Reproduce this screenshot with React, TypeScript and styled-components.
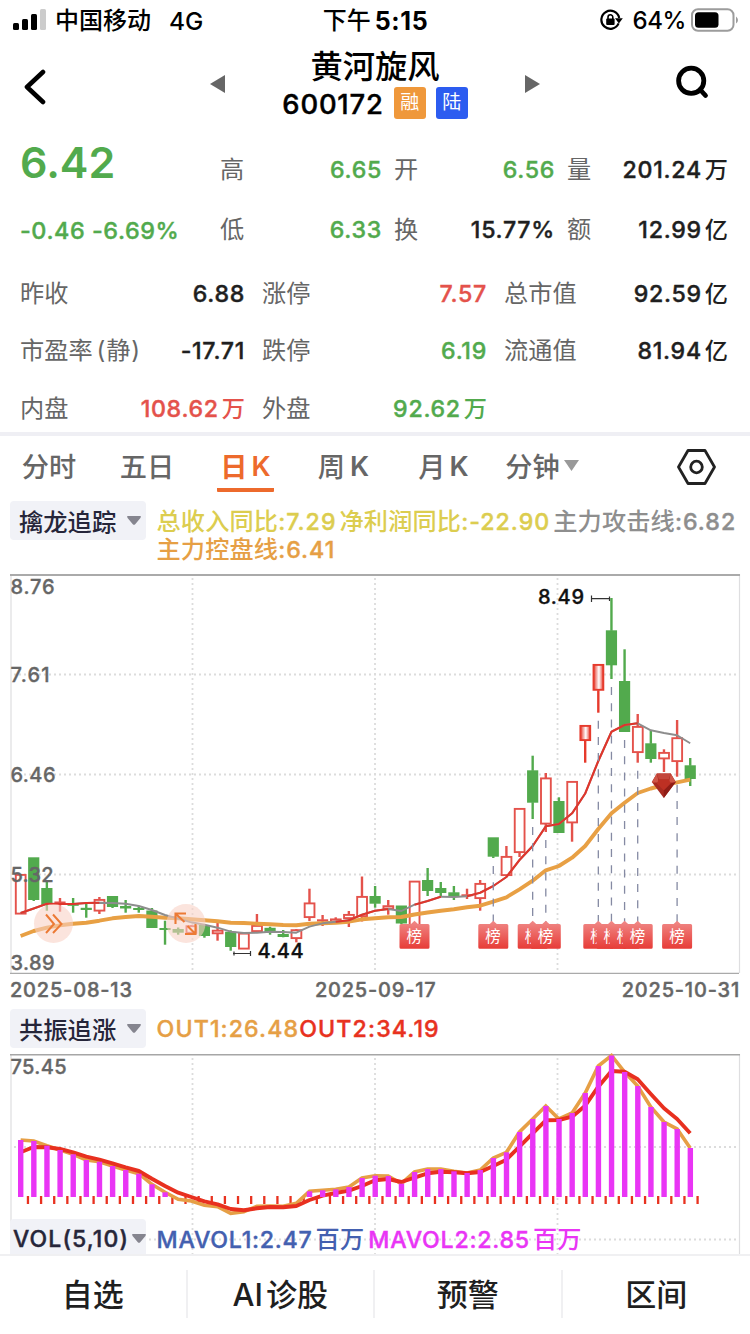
import React from 'react';
import styled, { createGlobalStyle, css } from 'styled-components';

const GREEN = '#52aa4d';
const RED = '#e4524b';
const INK = '#1f1f1f';
const GRAY = '#666666';

const GlobalStyle = createGlobalStyle`
  * { box-sizing: border-box; }
  html, body { margin: 0; padding: 0; background: #fff; }
  body { font-family: Inter, "Noto Sans CJK SC", sans-serif; -webkit-font-smoothing: antialiased; }
  svg { display: block; flex: none; }
`;

/* A weight between medium and semibold for figures */
const figure = css`
  font-weight: 500;
  -webkit-text-stroke: 0.4px currentColor;
`;

const Screen = styled.div`
  width: 750px;
  height: 1334px;
  display: flex;
  flex-direction: column;
  overflow: hidden;
  background: #fff;
  color: #000;
  white-space: nowrap;
`;

/* Status bar */
const StatusBar = styled.div`
  height: 40px;
  display: grid;
  grid-template-columns: 1fr auto 1fr;
  align-items: center;
  padding: 0 12px 0 13px;
`;
const StatusGroup = styled.div<{ $end?: boolean }>`
  display: flex;
  align-items: center;
  justify-content: ${(p) => (p.$end ? 'flex-end' : 'flex-start')};
`;
const StatusText = styled.span<{ $bold?: boolean; $ml?: number; $ls?: number; $size?: number }>`
  font-size: ${(p) => p.$size ?? 24}px;
  line-height: 30px;
  padding-top: 1px;
  font-weight: ${(p) => (p.$bold ? 700 : 500)};
  letter-spacing: ${(p) => p.$ls ?? 0}px;
  margin-left: ${(p) => p.$ml ?? 0}px;
`;

/* Header */
const Header = styled.header`
  height: 94px;
  display: flex;
  align-items: flex-start;
  padding-left: 23px;
`;
const HeaderIcon = styled.div<{ $top: number; $ml?: number }>`
  margin-top: ${(p) => p.$top}px;
  margin-left: ${(p) => p.$ml ?? 0}px;
`;
const TitleBlock = styled.div`
  width: 300px;
  display: flex;
  flex-direction: column;
  align-items: center;
  padding-top: 7px;
`;
const Title = styled.h1`
  margin: 0;
  font-size: 32.3px;
  line-height: 40px;
  font-weight: 500;
`;
const CodeRow = styled.div`
  display: flex;
  align-items: center;
  height: 32px;
`;
const Code = styled.span`
  ${figure}
  font-size: 27.4px;
  padding-top: 1px;
  letter-spacing: 0.8px;
  margin-right: 10px;
`;
const Badge = styled.span<{ $color: string }>`
  width: 32px;
  height: 32px;
  margin-right: 10px;
  border-radius: 3px;
  background: ${(p) => p.$color};
  color: #fff;
  font-size: 19px;
  line-height: 32px;
  text-align: center;
  &:last-child { margin-right: 0; }
`;

/* Quote */
const Quote = styled.section`
  height: 298px;
  padding: 3px 22px 0 20px;
`;
const QuoteRow = styled.div<{ $columns: string; $height: number }>`
  display: grid;
  grid-template-columns: ${(p) => p.$columns};
  height: ${(p) => p.$height}px;
  align-items: center;
`;
const Details = styled.div`
  padding-top: 4px;
`;
const Price = styled.div`
  color: ${GREEN};
  font-size: 43px;
  line-height: 50px;
  font-weight: 600;
  padding-bottom: 16px;
`;
const Change = styled.div`
  ${figure}
  color: ${GREEN};
  font-size: 23.4px;
  letter-spacing: 0.55px;
`;
const Cell = styled.div<{ $pad?: number }>`
  display: flex;
  justify-content: space-between;
  align-items: center;
  padding-right: ${(p) => p.$pad ?? 0}px;
  line-height: 34px;
`;
const Label = styled.span`
  color: ${GRAY};
  font-size: 24.2px;
`;
const LatinPart = styled.span`
  margin-left: 4px;
  letter-spacing: 0.8px;
`;
const Value = styled.span<{ $color?: string }>`
  ${figure}
  color: ${(p) => p.$color ?? INK};
  font-size: 23.2px;
  letter-spacing: 0.7px;
`;
const Unit = styled.span<{ $ml?: number }>`
  margin-left: ${(p) => p.$ml ?? 3}px;
  letter-spacing: 0;
  -webkit-text-stroke: 0;
`;

/* Period tabs */
const Tabs = styled.nav`
  height: 63px;
  border-top: 4px solid #efeff4;
  display: flex;
  padding: 0 34px 0 16px;
`;
const Tab = styled.div<{ $active?: boolean; $ml?: number; $width: number }>`
  display: flex;
  align-items: center;
  justify-content: center;
  width: ${(p) => p.$width}px;
  height: 56px;
  margin-left: ${(p) => p.$ml ?? 0}px;
  padding-top: 6px;
  border-bottom: 4px solid ${(p) => (p.$active ? '#ed6a2c' : 'transparent')};
  border-radius: 1px;
  color: ${(p) => (p.$active ? '#ed6a2c' : GRAY)};
  font-size: 27.2px;
  font-weight: ${(p) => (p.$active ? 600 : 500)};
`;
const Letter = styled.span<{ $ml: number }>`
  margin-left: ${(p) => p.$ml}px;
  padding-top: 2px;
  font-weight: 600;
`;
const TabCaret = styled.svg`
  margin-left: 4px;
`;
const Settings = styled.div`
  margin-left: auto;
  padding-top: 13px;
`;

/* Indicator rows */
const IndicatorRow = styled.div<{ $height: number; $top: number }>`
  height: ${(p) => p.$height}px;
  padding: ${(p) => p.$top}px 0 0 10px;
  display: flex;
  align-items: flex-start;
`;
const Chip = styled.div<{ $tight?: boolean }>`
  width: 136px;
  height: 39px;
  flex: none;
  display: flex;
  align-items: center;
  justify-content: space-between;
  padding: 0 ${(p) => (p.$tight ? 0 : 5)}px 0 ${(p) => (p.$tight ? 3 : 9)}px;
  border-radius: 4px;
  background: #f1f2f7;
  color: #26263a;
  font-size: ${(p) => (p.$tight ? 23 : 24.3)}px;
  font-weight: 500;
  ${(p) => p.$tight && figure}
  letter-spacing: ${(p) => (p.$tight ? 1.1 : 0)}px;
`;
const Legend = styled.div<{ $top?: number }>`
  display: flex;
  flex-wrap: wrap;
  margin-left: 10.5px;
  padding-top: ${(p) => p.$top ?? 7}px;
  width: 593px;
  line-height: 28px;
`;
const LegendItem = styled.span<{ $color: string; $mr?: number; $ls?: number }>`
  ${figure}
  color: ${(p) => p.$color};
  font-size: 23.2px;
  margin-right: ${(p) => p.$mr ?? 0}px;
  letter-spacing: ${(p) => p.$ls ?? 1}px;
`;
const Han = styled.span`
  font-size: 24.2px;
  letter-spacing: 0.15px;
  -webkit-text-stroke: 0;
`;

const DateRow = styled.div`
  ${figure}
  height: 28px;
  display: flex;
  justify-content: space-between;
  align-items: center;
  padding: 2px 10px 0 10px;
  color: ${GRAY};
  font-size: 20px;
  letter-spacing: 0.8px;
`;
const MidDate = styled.span`
  margin-right: 3px;
`;

const LowerPanel = styled.div`
  position: relative;
  height: 206px;
`;
const VolumeOverlay = styled.div`
  position: absolute;
  left: 10px;
  top: 171px;
  display: flex;
  height: 35px;
  overflow: hidden;
`;

const BottomBar = styled.footer`
  flex: 1;
  border-top: 2px solid #f0f0f2;
  background: #fff;
  display: grid;
  grid-template-columns: repeat(4, 1fr);
  padding-top: 14px;
`;
const Action = styled.button`
  height: 48px;
  border: 0;
  border-right: 2px solid #f0f0f2;
  background: none;
  padding: 0 0 4px;
  color: ${INK};
  font-family: inherit;
  font-size: 31px;
  font-weight: 500;
  &:last-child { border-right: 0; }
`;

const Caret = ({ w = 14, h = 9, color = '#85858f' }: { w?: number; h?: number; color?: string }) => (
  <svg width={w} height={h} viewBox="0 0 14 9"><path d="M.3 0H13.7Q14 1.6 13 2.6L8.2 8.3Q7 9.4 5.8 8.3L1 2.6Q0 1.6 .3 0Z" fill={color} /></svg>
);

/* Candles: kind (g falling, r rising, l limit-up), body top, body bottom, high, low */
type Candle = [string, number, number, number, number];
const candles: Candle[] = [
  ['r', 874, 914.5, 874, 914.5], ['g', 857.3, 900, 857.3, 901], ['g', 888, 905, 880, 910.7], ['r', 901.5, 903.5, 898, 911.7],
  ['g', 903.8, 905.8, 898, 912.7], ['g', 907.8, 910, 904, 917.7], ['r', 899, 911.5, 897, 914], ['g', 896, 907, 896, 908],
  ['g', 906, 908.5, 900, 912.7], ['g', 908, 910, 906, 912.7], ['g', 910.5, 928, 908, 928], ['g', 928, 930, 920.7, 944.7],
  ['g', 929, 932.7, 927.5, 934.7], ['r', 925.3, 933.7, 925, 934], ['g', 925, 936, 925, 937.7], ['r', 929.8, 934.2, 923, 940.7],
  ['g', 931.7, 947, 930.3, 950.7], ['r', 932.7, 949.5, 932.7, 949.5], ['r', 925, 932, 914, 932], ['g', 927.8, 932, 926.7, 934.7],
  ['g', 934, 937, 930, 937.3], ['r', 929.3, 939, 929, 942.3], ['r', 902.5, 918, 888.7, 921], ['r', 919.3, 921.5, 915, 926],
  ['r', 918.5, 922.5, 917.3, 922.5], ['r', 914, 919, 911, 927], ['r', 896, 917, 876.5, 921.5], ['g', 896, 903.7, 886, 907.7],
  ['r', 905.3, 909.5, 900, 914.7], ['g', 905.5, 923.5, 905.5, 924], ['r', 880.7, 928, 880.7, 928], ['g', 880, 891, 868, 896],
  ['g', 888, 893, 882, 896], ['g', 892.3, 896.7, 886, 900], ['r', 894.3, 896.3, 888.7, 899], ['r', 883, 899, 880, 910.7],
  ['g', 837.3, 856.7, 837.3, 858], ['r', 856, 876, 846, 876], ['r', 808, 853, 808, 857], ['g', 770.3, 802.7, 755.7, 819],
  ['r', 777.5, 824.5, 773, 832], ['g', 801, 833, 797.3, 833], ['r', 781, 823.3, 781, 841.7], ['l', 725, 741, 725, 762.7],
  ['l', 664, 690.7, 664, 712.7], ['g', 630.3, 665.3, 598, 679], ['g', 681, 732, 649.3, 732], ['r', 726, 753, 714, 762.7],
  ['g', 743.3, 759, 730.7, 762.7], ['r', 752, 759.3, 749.3, 772], ['r', 737.3, 762, 720, 776.7], ['g', 765.3, 779, 758, 786],
];

const control = [
  936, 931, 927.7, 925.3, 923.7, 922.7, 920.7, 918.3, 917, 916, 916.7, 917.7, 918.3, 919.3, 920.3, 921.3, 922.7, 923, 923.7,
  924.3, 925, 925.3, 923.7, 923.3, 922.7, 921.7, 919.3, 918.3, 917.3, 917, 914.5, 912.5, 910.7, 909.3, 907.3, 905.7, 901.7,
  897.3, 889.3, 880.7, 870.3, 866, 857.7, 846, 829, 813.3, 802.7, 793, 788.5, 785, 782.3, 779.7,
];
const attack = [
  913, 908.5, 903.7, 904, 904, 903, 902.7, 903, 903.7, 906, 910, 915, 918.7, 922.3, 924.7, 927.7, 931.7, 933, 932.7, 931.7,
  932, 932.7, 926.7, 923.3, 921.7, 920.3, 914.7, 910.7, 909, 911, 904.7, 901, 896.7, 897, 896.3, 892.7, 886, 877, 860, 846,
  826.3, 824, 813.3, 793.5, 761, 731.7, 725, 723.3, 730.3, 733, 735.3, 743.3,
];
const attackRed: [number, number][] = [[0, 6], [24, 28], [30, 32], [34, 47]];
const listed = [30, 36, 39, 40, 44, 45, 46, 47, 50];

const out1 = [
  1140, 1141, 1145.7, 1150, 1154.3, 1160, 1161.7, 1166, 1170, 1173.7, 1184.3, 1192.3, 1199.3, 1201, 1205.3, 1206.7, 1213.3,
  1211.7, 1206.3, 1206, 1206.3, 1203.3, 1191.3, 1190.3, 1189.3, 1187, 1178, 1175.7, 1176, 1183.7, 1172, 1169, 1169, 1171.3, 1173,
  1170, 1158, 1152.3, 1132, 1119, 1106, 1119, 1113, 1093, 1066, 1055.5, 1072, 1086, 1107, 1122, 1129, 1148,
];
const out2 = [
  1152.3, 1147, 1147.3, 1149, 1152.3, 1156.7, 1159.7, 1163.3, 1167.3, 1171, 1178.7, 1186, 1192.7, 1197, 1201.3, 1204.3, 1209,
  1210.3, 1208.3, 1207, 1207.3, 1206, 1200, 1195.7, 1193, 1190.7, 1186, 1180.3, 1179, 1182, 1177.7, 1173.3, 1171.7, 1172.3,
  1173.3, 1172, 1166, 1159.7, 1146.7, 1133.3, 1120.3, 1120, 1116.7, 1105.7, 1086.7, 1071, 1071.7, 1079.3, 1094, 1108.3, 1119, 1133.3,
];

const cx = (i: number) => 20.6 + i * 13.13;
const points = (ys: number[], from = 0, to = ys.length - 1) =>
  ys.slice(from, to + 1).map((y, k) => `${cx(from + k).toFixed(1)},${y}`).join(' ');

const CandleMark = ({ c, i }: { c: Candle; i: number }) => {
  const [kind, top, bottom, high, low] = c;
  const x = cx(i);
  const color = kind === 'g' ? GREEN : kind === 'l' ? '#e63a2c' : RED;
  const thin = bottom - top < 2.6;
  return (
    <g>
      {high < top && <line x1={x} x2={x} y1={high} y2={top + 0.5} stroke={color} strokeWidth="2.4" />}
      {low > bottom && <line x1={x} x2={x} y1={bottom - 0.5} y2={low} stroke={color} strokeWidth="2.4" />}
      {kind === 'g' || thin ? (
        <rect x={x - 5.6} y={top} width="11.2" height={bottom - top} fill={color} />
      ) : (
        <rect x={x - 4.8} y={top + 0.9} width="9.8" height={Math.max(1, bottom - top - 1.8)} fill={kind === 'l' ? 'url(#limit)' : '#fff'} stroke={color} strokeWidth={1.9} />
      )}
    </g>
  );
};

const AxisText = styled.text`
  font-size: 20px;
  font-weight: 500;
  stroke-width: 0.35px;
`;
const Txt = ({ x, y, w, children, fill = GRAY }: { x: number; y: number; w: number; children: string; fill?: string }) => (
  <AxisText x={x} y={y} textLength={w} fill={fill} stroke={fill}>{children}</AxisText>
);

const PriceChart = () => (
  <svg width="750" height="408" viewBox="0 567 750 408">
    <defs>
      <linearGradient id="limit"><stop offset="0" stopColor="#e63a2c" /><stop offset=".55" stopColor="#fff" /><stop offset="1" stopColor="#e63a2c" /></linearGradient>
      <linearGradient id="tag" x2="0" y2="1"><stop offset="0" stopColor="#f08a88" /><stop offset="1" stopColor="#e73c37" /></linearGradient>
    </defs>
    <path d="M11 574V973M739.5 574V973" stroke="#dedee0" strokeWidth="1.2" />
    <path d="M10 575H740" stroke="#aaa" strokeWidth="2" />
    <path d="M10 973.3H739" stroke="#aaa" strokeWidth="1.2" />
    <path d="M192.5 578V973M375 578V973M557.5 578V973M14 674.5H738M14 774.5H738M14 874.5H738" stroke="#dcdcdc" strokeWidth="1.8" strokeDasharray="2 3" />
    {candles.map((c, i) => <CandleMark key={i} c={c} i={i} />)}
    <polyline points={points(control)} fill="none" stroke="#e8a044" strokeWidth="3.9" strokeLinejoin="round" />
    <polyline points={points(attack)} fill="none" stroke="#8d8d8d" strokeWidth="1.9" strokeLinejoin="round" />
    {attackRed.map(([a, b]) => <polyline key={a} points={points(attack, a, b)} fill="none" stroke="#e0352b" strokeWidth="2.1" strokeLinejoin="round" />)}
    {listed.map((i) => (
      <line key={i} x1={cx(i)} x2={cx(i)} y1={candles[i][4] + 8} y2="922" stroke="#858aa3" strokeWidth="1.3" strokeDasharray="8 8.2" />
    ))}
    <Txt x={10.5} y={594} w={44}>8.76</Txt>
    <Txt x={10.5} y={682} w={39}>7.61</Txt>
    <Txt x={10.5} y={782} w={45}>6.46</Txt>
    <Txt x={10.5} y={882} w={43}>5.32</Txt>
    <Txt x={10.5} y={970} w={44}>3.89</Txt>
    <Txt x={538} y={603.5} w={46} fill="#111">8.49</Txt>
    <path d="M591.5 598.6H609.5M591.5 595.5V602M609.5 596.5V601" stroke="#333" strokeWidth="1.2" />
    <Txt x={257.5} y={957.5} w={46} fill="#111">4.44</Txt>
    <path d="M233 953.5H250.5M250.5 951V956M234 951.5V955.5" stroke="#333" strokeWidth="1.2" />
    {listed.map((i) => (
      <g key={i} transform={`translate(${cx(i).toFixed(1)} 0)`}>
        <path d="M-13.5 924H-3.5L0 920.7L3.5 924H13.5Q15 924 15 925.5V947.2Q15 948.7 13.5 948.7H-13.5Q-15 948.7 -15 947.2V925.5Q-15 924 -13.5 924Z" fill="url(#tag)" />
        <text x="-.2" y="942" fontSize="15.5" fill="#fff" textAnchor="middle">榜</text>
      </g>
    ))}
    <g transform="translate(663.8 785.5)">
      <path d="M-7 -12H7L12 -3.5L0 12.5L-12 -3.5Z" fill="#a82a20" />
      <path d="M-7 -12L-5 -3H-12ZM7 -12L5 -3H12Z" fill="#cf5546" />
      <path d="M-7 -12H7L5 -6H-5Z" fill="#c4453a" />
      <path d="M-5 -6H5L7 -2L0 5L-7 -2Z" fill="#bd3023" />
      <path d="M7 -2L12 -3.5L0 12.5L0 5Z" fill="#8f1d16" />
    </g>
    <circle cx="53.5" cy="923.5" r="19.5" fill="#f8d0c4" fillOpacity=".58" />
    <path d="M46 914.5L54 924L46 933M53 914.5L61.5 924L53 933" fill="none" stroke="#ec7a35" strokeWidth="2" />
    <circle cx="186" cy="923.5" r="19.5" fill="#f8d0c4" fillOpacity=".58" />
    <path d="M186 913.5H175.5V924M176 914L184.5 922M185 934H195.5V924M195 933.5L187.5 926" fill="none" stroke="#ec7a35" strokeWidth="2.1" />
  </svg>
);

const ResonanceChart = () => (
  <svg width="750" height="206" viewBox="0 1048 750 206">
    <path d="M11 1054V1254M739.5 1054V1254" stroke="#dedee0" strokeWidth="1.2" />
    <path d="M192.5 1058V1254M375 1058V1254M557.5 1058V1254M14 1147H738M14 1239.5H738" stroke="#dcdcdc" strokeWidth="1.8" strokeDasharray="2 3" />
    <path d="M10 1054.8H740" stroke="#a6a6a6" strokeWidth="1.6" />
    {out1.map((_, i) => <rect key={i} x={cx(i) + 6.2} y="1196" width="2.3" height="8" fill="#e8321f" />)}
    <polyline points={points(out1)} fill="none" stroke="#e69f45" strokeWidth="3.6" strokeLinejoin="miter" />
    <polyline points={points(out2)} fill="none" stroke="#e8301f" strokeWidth="3.9" strokeLinejoin="round" />
    {out1.map((y, i) => y < 1197 && <rect key={i} x={cx(i) - 2.6} y={y} width="5.4" height={1197 - y} fill="#e935f5" />)}
    <Txt x={10.5} y={1074} w={56}>75.45</Txt>
  </svg>
);

type Item = { label: string; latin?: string; value: string; unit?: string; color?: string };
const Stat = ({ item, pad }: { item: Item; pad?: number }) => (
  <Cell $pad={pad}>
    <Label>{item.label}{item.latin && <LatinPart>{item.latin}</LatinPart>}</Label>
    <Value $color={item.color}>{item.value}{item.unit && <Unit>{item.unit}</Unit>}</Value>
  </Cell>
);

const topRows: Item[][] = [
  [{ label: '高', value: '6.65', color: GREEN }, { label: '开', value: '6.56', color: GREEN }, { label: '量', value: '201.24', unit: '万' }],
  [{ label: '低', value: '6.33', color: GREEN }, { label: '换', value: '15.77%' }, { label: '额', value: '12.99', unit: '亿' }],
];
const detailRows: Item[][] = [
  [{ label: '昨收', value: '6.88' }, { label: '涨停', value: '7.57', color: RED }, { label: '总市值', value: '92.59', unit: '亿' }],
  [{ label: '市盈率', latin: '(静)', value: '-17.71' }, { label: '跌停', value: '6.19', color: GREEN }, { label: '流通值', value: '81.94', unit: '亿' }],
  [{ label: '内盘', value: '108.62', unit: '万', color: RED }, { label: '外盘', value: '92.62', unit: '万', color: GREEN }],
];

export default function App() {
  return (
    <Screen>
      <GlobalStyle />
      <StatusBar>
        <StatusGroup>
          <svg width="34" height="22" viewBox="0 0 34 22">
            <rect x="0" y="14" width="6" height="7" rx="1.5" /><rect x="9" y="10" width="6" height="11" rx="1.5" />
            <rect x="18" y="5" width="6" height="16" rx="1.5" /><rect x="27" y="0" width="6" height="21" rx="1.5" fill="#ccc" />
          </svg>
          <StatusText $ml={8}>中国移动</StatusText>
          <StatusText $ml={18} $size={24.5}>4G</StatusText>
        </StatusGroup>
        <StatusGroup>
          <StatusText>下午</StatusText>
          <StatusText $bold $ml={4} $size={25} $ls={0.6}>5:15</StatusText>
        </StatusGroup>
        <StatusGroup $end>
          <svg width="23" height="22" viewBox="0 0 23 22">
            <path d="M18.6 14.4A9 9 0 1 1 19.2 9" fill="none" stroke="#000" strokeWidth="2.2" />
            <path d="M15 9.2H22.8L18.9 14.4Z" />
            <rect x="6.2" y="9.6" width="8.4" height="6.4" rx="1" />
            <path d="M8 10V8.2A2.4 2.4 0 0 1 12.8 8.2V10" fill="none" stroke="#000" strokeWidth="1.6" />
          </svg>
          <StatusText $ml={9} $size={24} $ls={-0.4}>64%</StatusText>
          <svg width="52" height="24" viewBox="0 0 52 24">
            <rect x="6" y="1.2" width="41.5" height="21.5" rx="6" fill="none" stroke="#9c9c9c" strokeWidth="2" />
            <rect x="9" y="4.2" width="23.5" height="15.5" rx="3.5" />
            <path d="M50 8.5Q52 10 52 12T50 15.5Z" fill="#9c9c9c" />
          </svg>
        </StatusGroup>
      </StatusBar>

      <Header>
        <HeaderIcon $top={29}>
          <svg width="24" height="36" viewBox="0 0 24 36"><path d="M20 3L4 18L20 33" fill="none" stroke="#000" strokeWidth="4.6" strokeLinecap="round" strokeLinejoin="round" /></svg>
        </HeaderIcon>
        <HeaderIcon $top={35} $ml={163}>
          <svg width="15" height="18" viewBox="0 0 15 18"><path d="M15 0V18L0 9Z" fill="#666" /></svg>
        </HeaderIcon>
        <TitleBlock>
          <Title>黄河旋风</Title>
          <CodeRow>
            <Code>600172</Code>
            <Badge $color="#ef983b">融</Badge>
            <Badge $color="#2c5cf0">陆</Badge>
          </CodeRow>
        </TitleBlock>
        <HeaderIcon $top={35}>
          <svg width="15" height="18" viewBox="0 0 15 18"><path d="M0 0V18L15 9Z" fill="#666" /></svg>
        </HeaderIcon>
        <HeaderIcon $top={25} $ml={136}>
          <svg width="34" height="34" viewBox="0 0 34 34"><circle cx="15.2" cy="15.8" r="12.6" fill="none" stroke="#000" strokeWidth="4.8" /><path d="M24 24.5L29.5 30.5" stroke="#000" strokeWidth="4.8" strokeLinecap="round" /></svg>
        </HeaderIcon>
      </Header>

      <Quote>
        {topRows.map((row, r) => (
          <QuoteRow key={r} $columns="200px 174px 173px 161px" $height={62}>
            {r === 0 ? <Price>6.42</Price> : <Change>-0.46 -6.69%</Change>}
            {row.map((item, i) => <Stat key={item.label} item={item} pad={i < 2 ? 12 : 0} />)}
          </QuoteRow>
        ))}
        <Details>
          {detailRows.map((row, r) => (
            <QuoteRow key={r} $columns="242px 242px 224px" $height={57.5}>
              {row.map((item, i) => <Stat key={item.label} item={item} pad={i < 2 ? 17 : 0} />)}
            </QuoteRow>
          ))}
        </Details>
      </Quote>

      <Tabs>
        <Tab $width={66}>分时</Tab>
        <Tab $width={66} $ml={32}>五日</Tab>
        <Tab $width={57} $ml={37} $active>日<Letter $ml={4}>K</Letter></Tab>
        <Tab $width={57} $ml={41}>周<Letter $ml={5}>K</Letter></Tab>
        <Tab $width={57} $ml={43}>月<Letter $ml={4}>K</Letter></Tab>
        <Tab $width={80} $ml={30}>
          分钟
          <TabCaret width="15" height="11" viewBox="0 0 15 11"><path d="M0 0H15L7.5 11Z" fill="#999" /></TabCaret>
        </Tab>
        <Settings>
          <svg width="39" height="36" viewBox="0 0 39 36">
            <path d="M11 1.5H28L37.5 18L28 34.5H11L1.5 18Z" fill="none" stroke="#222" strokeWidth="2.8" strokeLinejoin="round" />
            <circle cx="19.5" cy="18" r="5.8" fill="none" stroke="#222" strokeWidth="2.8" />
          </svg>
        </Settings>
      </Tabs>

      <IndicatorRow $height={72} $top={6}>
        <Chip>擒龙追踪<Caret /></Chip>
        <Legend>
          <LegendItem $color="#dccd4f" $mr={3}><Han>总收入同比</Han>:7.29</LegendItem>
          <LegendItem $color="#dccd4f" $mr={3}><Han>净利润同比</Han>:-22.90</LegendItem>
          <LegendItem $color="#8e8e8e"><Han>主力攻击线</Han>:6.82</LegendItem>
          <LegendItem $color="#e69f45"><Han>主力控盘线</Han>:6.41</LegendItem>
        </Legend>
      </IndicatorRow>

      <PriceChart />
      <DateRow><span>2025-08-13</span><MidDate>2025-09-17</MidDate><span>2025-10-31</span></DateRow>

      <IndicatorRow $height={45} $top={6}>
        <Chip>共振追涨<Caret /></Chip>
        <Legend $top={6}>
          <LegendItem $color="#e69f45" $ls={1.1}>OUT1:26.48</LegendItem>
          <LegendItem $color="#e8321f" $ls={1.1}>OUT2:34.19</LegendItem>
        </Legend>
      </IndicatorRow>

      <LowerPanel>
        <ResonanceChart />
        <VolumeOverlay>
          <Chip $tight>VOL(5,10)<Caret /></Chip>
          <Legend $top={7}>
            <LegendItem $color="#4360b0" $mr={4} $ls={0.75}>MAVOL1:2.47<Unit $ml={3}><Han>百万</Han></Unit></LegendItem>
            <LegendItem $color="#e935f5" $ls={0.75}>MAVOL2:2.85<Unit $ml={3}><Han>百万</Han></Unit></LegendItem>
          </Legend>
        </VolumeOverlay>
      </LowerPanel>

      <BottomBar>
        <Action>自选</Action>
        <Action>AI<Unit>诊股</Unit></Action>
        <Action>预警</Action>
        <Action>区间</Action>
      </BottomBar>
    </Screen>
  );
}
